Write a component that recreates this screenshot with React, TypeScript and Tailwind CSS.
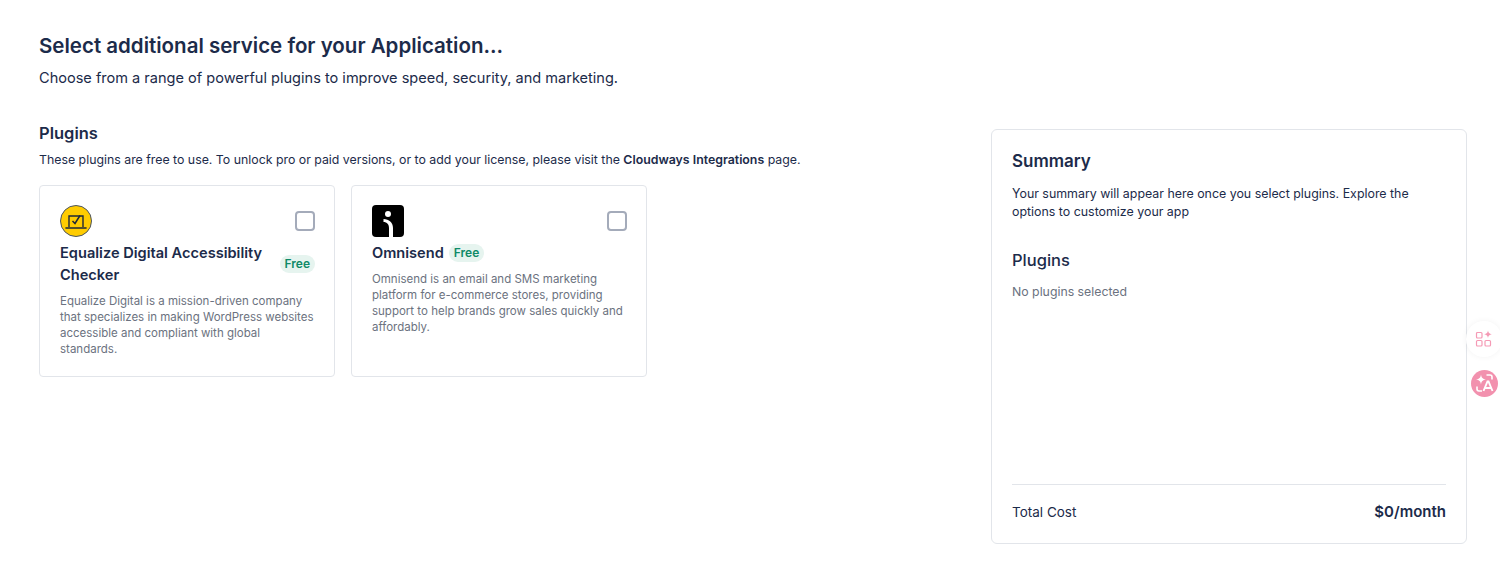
const plugins = [
  {
    name: "Equalize Digital Accessibility Checker",
    body: "Equalize Digital is a mission-driven company that specializes in making WordPress websites accessible and compliant with global standards.",
    logo: "equalize",
  },
  {
    name: "Omnisend",
    body: "Omnisend is an email and SMS marketing platform for e-commerce stores, providing support to help brands grow sales quickly and affordably.",
    logo: "omnisend",
  },
];

function EqualizeLogo() {
  return (
    <svg width="32" height="32" viewBox="0 0 32 32" fill="none">
      <circle cx="16" cy="16" r="15.5" fill="#ffcc00" stroke="#4b5563" />
      <path d="M9 22V11h14v11" stroke="#1f2937" strokeWidth="1.4" />
      <path d="M6 23h20" stroke="#1f2937" strokeWidth="1.6" strokeLinecap="round" />
      <path d="M12.5 16l2.5 2.5 5-8" stroke="#1f2937" strokeWidth="1.5" />
    </svg>
  );
}

function OmnisendLogo() {
  return (
    <svg width="32" height="32" viewBox="0 0 32 32">
      <rect width="32" height="32" rx="4" fill="#000" />
      <circle cx="16" cy="9" r="3" fill="#fff" />
      <path d="M11.5 17c3.500 0 5.500 2.500 5.500 6v9h4v-9c0-5.500-4-9-9.500-9z" fill="#fff" />
    </svg>
  );
}

function FreeBadge() {
  return (
    <span className="block shrink-0 rounded-full bg-[#e6f4ef] px-[5px] py-px text-[12px] leading-[16px] font-semibold text-[#0f8a68]">
      Free
    </span>
  );
}

function PluginCard({ plugin }: { plugin: (typeof plugins)[number] }) {
  return (
    <div className="h-[192px] w-[296px] rounded-[4px] border border-[#e2e5ea] bg-white pl-5 pr-[19px] pt-[19px]">
      <div className="flex items-center justify-between">
        {plugin.logo === "equalize" ? <EqualizeLogo /> : <OmnisendLogo />}
        <div className="h-5 w-5 rounded-[4px] border-2 border-[#a4abba]" />
      </div>
      <div className="mt-[5px] flex items-center gap-[5px]">
        <h3 className="text-[14.6px] leading-[22px] font-semibold text-[#1c2b4a]">{plugin.name}</h3>
        <div className={plugin.logo === "equalize" ? "ml-auto shrink-0" : "shrink-0"}>
          <FreeBadge />
        </div>
      </div>
      <p className="mt-[7px] text-[11.5px] leading-4 text-[#6b7280]">{plugin.body}</p>
    </div>
  );
}

export default function App() {
  return (
    <div className="relative h-[567px] w-[1500px] overflow-hidden bg-white font-['Inter',sans-serif] text-[#1c2b4a]">
      <div className="flex h-full justify-between pl-[39px] pr-[33px] pt-[33px]">
        <div className="w-[780px]">
          <h1 className="text-[20.5px] leading-[26px] font-semibold">
            Select additional service for your Application...
          </h1>
          <p className="mt-[7px] text-[14.55px] leading-[24px]">
            Choose from a range of powerful plugins to improve speed, security, and marketing.
          </p>
          <h2 className="mt-[31px] text-[16.5px] leading-6 font-semibold">Plugins</h2>
          <p className="mt-[5px] whitespace-nowrap text-[12.33px] leading-5">
            These plugins are free to use. To unlock pro or paid versions, or to add your license, please visit the{" "}
            <span className="font-semibold">Cloudways Integrations</span> page.
          </p>
          <div className="mt-[15px] flex gap-4">
            {plugins.map((plugin) => (
              <PluginCard key={plugin.name} plugin={plugin} />
            ))}
          </div>
        </div>
        <aside className="mt-24 flex h-[415px] w-[476px] flex-col rounded-[6px] border border-[#e2e5ea] bg-white px-5 pt-[19px] pb-[21px]">
          <h2 className="text-[17px] leading-6 font-semibold">Summary</h2>
          <p className="mt-3 text-[12.4px] leading-[18px]">
            Your summary will appear here once you select plugins. Explore the options to customize your app
          </p>
          <h2 className="mt-[27px] text-[16.5px] leading-6 font-medium">Plugins</h2>
          <p className="mt-[10px] text-[12.3px] leading-5 text-[#6b7280]">No plugins selected</p>
          <div className="mt-auto flex items-center justify-between border-t border-[#e2e5ea] pt-[17px]">
            <span className="text-[13.5px] leading-5">Total Cost</span>
            <span className="text-[15px] leading-5 font-semibold">$0/month</span>
          </div>
        </aside>
      </div>

      {/* floating side buttons */}
      <div className="absolute left-[1466px] top-[321px] flex h-9 w-9 items-center justify-center rounded-full bg-white shadow-[0_0_6px_rgba(0,0,0,0.05)]">
        <svg width="18" height="18" viewBox="0 0 18 18" fill="none" stroke="#f59ab5" strokeWidth="1.2">
          <rect x="1.500" y="2.500" width="5.500" height="5.500" rx="1" />
          <rect x="1.500" y="10.500" width="5.500" height="5.500" rx="1" />
          <rect x="10" y="10.500" width="5.500" height="5.500" rx="1" />
          <path d="M13 .5c.4 2.400 1.200 3.200 3.800 3.800C14.200 4.900 13.400 5.700 13 8.100c-.4-2.400-1.200-3.200-3.800-3.800C11.800 3.700 12.600 2.900 13 .5z" fill="#f59ab5" stroke="none" />
        </svg>
      </div>
      <div className="absolute left-[1471px] top-[370px] flex h-[27px] w-[27px] items-center justify-center rounded-full bg-[#f291ae] shadow-[0_0_0_4px_#fff]">
        <svg width="27" height="27" viewBox="0 0 27 27" fill="none" stroke="#fff" strokeWidth="1.6">
          <path d="M10 4.500c.6 3.400 1.600 4.400 5 5-3.400.6-4.400 1.600-5 5-.6-3.400-1.600-4.400-5-5 3.400-.6 4.400-1.600 5-5z" fill="#fff" stroke="none" />
          <path d="M15.500 5h3.500a2 2 0 0 1 2 2v2.500" />
          <path d="M6 16.500V19a2 2 0 0 0 2 2h3" />
          <path d="M12.500 21l4-9.500h1l4 9.500M14 18h6" strokeWidth="1.900" />
        </svg>
      </div>
    </div>
  );
}
